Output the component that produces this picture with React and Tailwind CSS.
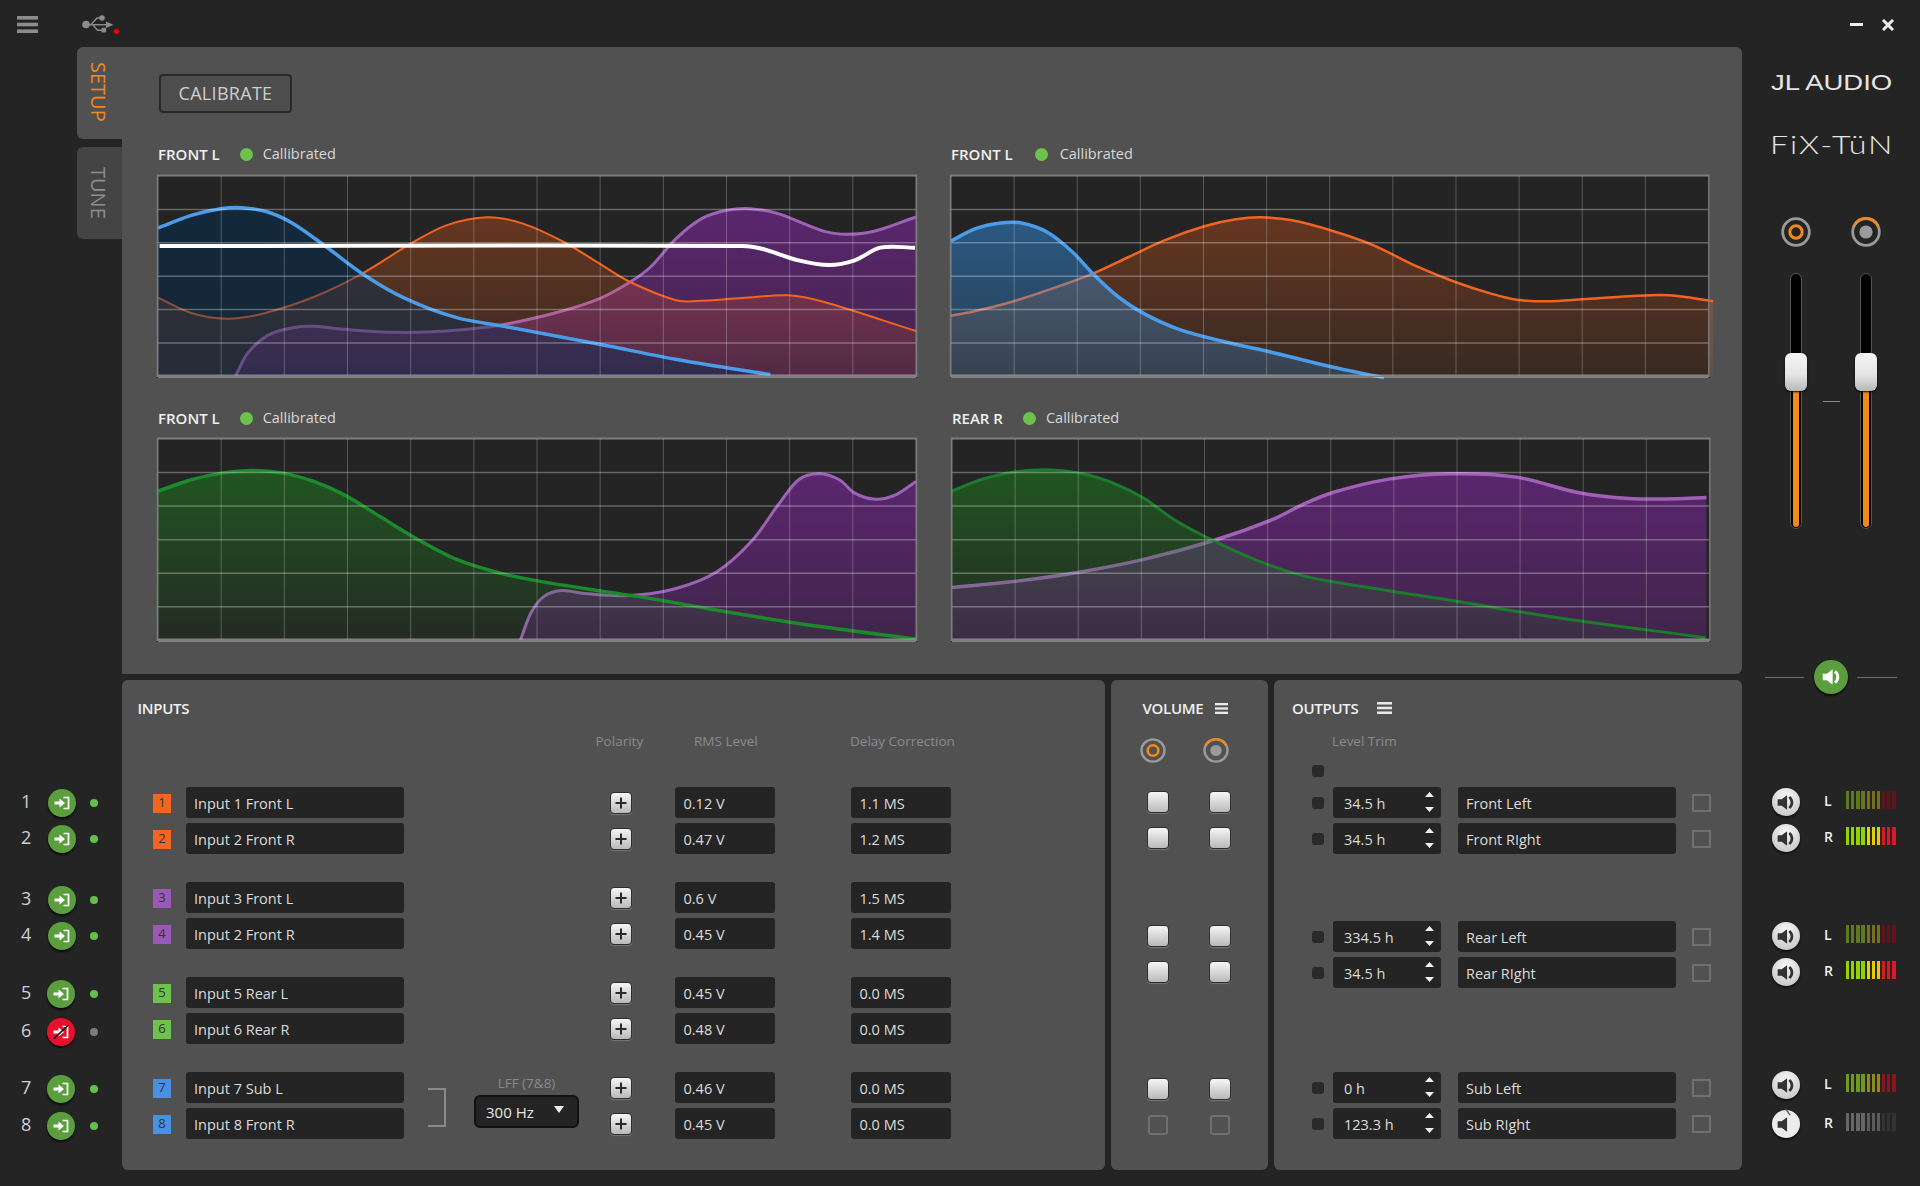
const font = { fontFamily: '"Open Sans", "Noto Sans", sans-serif' };

// curves are sampled in picture space, smoothed by slope so long flat runs don't overshoot
function smooth(pts) {
  const slope = (i) => {
    const a = pts[Math.max(i - 1, 0)];
    const b = pts[Math.min(i + 1, pts.length - 1)];
    return (b[1] - a[1]) / (b[0] - a[0]);
  };
  let d = `M${pts[0][0]} ${pts[0][1]}`;
  for (let i = 0; i < pts.length - 1; i++) {
    const [x1, y1] = pts[i];
    const [x2, y2] = pts[i + 1];
    const h = (x2 - x1) / 3;
    d += ` C${x1 + h} ${y1 + slope(i) * h} ${x2 - h} ${y2 - slope(i + 1) * h} ${x2} ${y2}`;
  }
  return d;
}

const GRADS = {
  purple: ['rgb(142,40,180)', 0.52, 0.26],
  orange: ['rgb(255,98,22)', 0.3, 0.09],
  navy: ['rgb(0,46,90)', 0.45, 0.38],
  blue: ['rgb(50,150,240)', 0.46, 0.22],
  green: ['rgb(30,130,30)', 0.53, 0.07],
};

const charts = [
  {
    id: 'a', label: 'FRONT L', box: [33, 44, 1489, 609], grid: [35, 1520, 47, 648], h: 'h-[203px]',
    series: [
      { fill: 'purple', stroke: '#9c62b4', w: 3, pts: [[187,646],[210,580],[250,525],[300,502],[340,498],[400,507],[500,516],[600,512],[710,493],[820,455],[900,415],[960,365],[1000,320],[1050,235],[1100,175],[1150,150],[1195,145],[1250,160],[1300,190],[1340,213],[1385,222],[1440,212],[1520,170]] },
      { fill: 'orange', stroke: '#f26322', w: 2, pts: [[35,412],[100,458],[170,475],[240,460],[340,410],[435,340],[530,250],[600,195],[680,171],[750,190],[830,245],[900,310],[960,365],[1050,420],[1090,422],[1180,413],[1270,405],[1340,425],[1520,512]] },
      { fill: 'navy', stroke: '#4a9be8', w: 3.5, pts: [[35,203],[100,165],[158,145],[200,142],[250,155],[300,190],[365,260],[435,340],[520,415],[620,472],[710,497],[900,552],[1060,600],[1235,643]] },
      { stroke: '#ffffff', w: 4, pts: [[38,257],[1180,257],[1220,266],[1290,300],[1350,314],[1400,300],[1450,262],[1518,262]] },
    ],
  },
  {
    id: 'b', label: 'FRONT L', box: [20, 44, 1489, 609], grid: [22, 1506, 47, 648], h: 'h-[203px]',
    series: [
      { fill: 'orange', stroke: '#f26322', w: 2.5, pts: [[22,466],[70,452],[140,425],[220,385],[300,340],[370,290],[440,240],[520,197],[580,177],[630,171],[690,180],[770,212],[850,255],[930,315],[1010,365],[1080,400],[1130,418],[1190,423],[1260,417],[1350,408],[1430,405],[1515,423]] },
      { fill: 'blue', stroke: '#4a9be8', w: 3.5, pts: [[22,242],[70,205],[120,188],[160,188],[210,215],[260,275],[300,340],[350,410],[400,460],[470,508],[560,545],[640,572],[760,617],[870,652]] },
    ],
  },
  {
    id: 'c', label: 'FRONT L', box: [33, 115, 1489, 610], grid: [35, 1520, 118, 720], h: 'h-[204px]',
    series: [
      { fill: 'purple', stroke: '#9c62b4', w: 3, pts: [[745,719],[765,640],[790,590],[825,571],[870,580],[960,586],[1050,565],[1130,515],[1200,420],[1250,315],[1290,240],[1330,222],[1370,240],[1400,280],[1440,298],[1480,285],[1520,245]] },
      { fill: 'green', stroke: '#1a8a2a', w: 3.5, pts: [[35,274],[100,240],[160,220],[220,212],[280,220],[340,245],[400,285],[470,350],[540,415],[620,478],[700,517],[770,540],[900,572],[1000,595],[1150,635],[1300,672],[1520,716]] },
    ],
  },
  {
    id: 'd', label: 'REAR R', box: [22, 115, 1489, 610], grid: [24, 1508, 118, 720], h: 'h-[204px]',
    series: [
      { fill: 'purple', stroke: '#a060b8', w: 3.5, pts: [[22,562],[140,545],[270,517],[400,478],[540,420],[650,360],[710,315],[770,278],[880,238],[1000,222],[1130,232],[1250,278],[1350,296],[1440,297],[1502,293]] },
      { fill: 'green', stroke: '#1c7a2c', w: 3, pts: [[24,274],[80,240],[140,218],[210,210],[280,222],[340,250],[400,295],[460,360],[540,425],[620,480],[700,522],[770,545],[1000,600],[1200,650],[1500,712]] },
    ],
  },
];

function Chart({ chart }) {
  const [x0, x1, y0, y1] = chart.grid;
  const bottom = y1;
  return (
    <svg
      className={`block w-[760px] bg-[#242424] overflow-visible ${chart.h}`}
      viewBox={chart.box.join(' ')}
      preserveAspectRatio="none"
    >
      <defs>
        {Object.entries(GRADS).map(([k, [c, top, low]]) => (
          <linearGradient key={k} id={`${chart.id}-${k}`} x1="0" y1="0" x2="0" y2="1">
            <stop offset="0" stopColor={c} stopOpacity={top} />
            <stop offset="1" stopColor={c} stopOpacity={low} />
          </linearGradient>
        ))}
      </defs>
      {chart.series.filter((s) => s.stroke !== '#ffffff').map((s, i) => {
        const line = smooth(s.pts);
        const first = s.pts[0][0];
        const last = s.pts[s.pts.length - 1][0];
        return (
          <g key={i}>
            <path d={`${line} L${last} ${bottom} L${first} ${bottom} Z`} fill={`url(#${chart.id}-${s.fill})`} />
            <path d={line} fill="none" stroke={s.stroke} strokeWidth={s.w} vectorEffect="non-scaling-stroke" />
          </g>
        );
      })}
      {Array.from({ length: 13 }).map((_, i) => {
        const x = x0 + ((x1 - x0) * i) / 12;
        return <line key={i} x1={x} x2={x} y1={y0} y2={y1} stroke="#fff" strokeOpacity="0.24" strokeWidth="1" vectorEffect="non-scaling-stroke" />;
      })}
      {Array.from({ length: 7 }).map((_, i) => {
        const y = y0 + ((y1 - y0) * i) / 6;
        return <line key={i} x1={x0} x2={x1} y1={y} y2={y} stroke="#fff" strokeOpacity={i === 6 ? 0.42 : 0.3} strokeWidth={i === 6 ? 3.5 : 1.5} vectorEffect="non-scaling-stroke" />;
      })}
      <rect x={x0 - 1} y={y0 - 2} width={x1 - x0 + 2} height={y1 - y0 + 2} fill="none" stroke="#7c7c7c" strokeWidth="1.5" vectorEffect="non-scaling-stroke" />
      {chart.series.filter((s) => s.stroke === '#ffffff').map((s, i) => (
        <path key={i} d={smooth(s.pts)} fill="none" stroke={s.stroke} strokeWidth={s.w} vectorEffect="non-scaling-stroke" />
      ))}
    </svg>
  );
}

function ChartLabel({ label, wide }) {
  return (
    <div className={`h-[20px] flex items-center pl-px text-[15px] ${wide ? 'gap-[22px]' : 'gap-[20px]'}`}>
      <span className="font-semibold text-[#f0f0f0]">{label}</span>
      <span className="w-[13px] h-[13px] rounded-full bg-[#6cc24a]" />
      <span className="-ml-[10px] text-[14.5px] text-[#d8d8d8]">Callibrated</span>
    </div>
  );
}

function Burger({ className }) {
  return (
    <svg className={className} viewBox="0 0 21 17" preserveAspectRatio="none" fill="currentColor">
      <rect width="21" height="3.6" />
      <rect y="6.7" width="21" height="3.6" />
      <rect y="13.4" width="21" height="3.6" />
    </svg>
  );
}

function UsbIcon() {
  return (
    <svg className="w-[32px] h-[18px] text-[#8c8c8c]" viewBox="0 0 32 18" fill="currentColor">
      <circle cx="4" cy="9.5" r="3.8" />
      <path d="M6 9h19v1.4H6z" />
      <path d="M24 6.5 L31.5 9.7 L24 13z" />
      <path d="M9 9.4 L15 3 H18" fill="none" stroke="currentColor" strokeWidth="1.4" />
      <circle cx="20" cy="3" r="2.8" />
      <path d="M11 10 L15.5 15.2 H20" fill="none" stroke="currentColor" strokeWidth="1.4" />
      <rect x="19.5" y="12.8" width="4.6" height="4.6" />
    </svg>
  );
}

function InputIcon({ off }) {
  return (
    <svg className="w-[16px] h-[14px] text-white" viewBox="0 0 16 14" fill="currentColor">
      <path d="M0.5 5.5h5V2.6L11 7l-5.5 4.4V8.5h-5z" />
      <path d="M9.5 1.5h5v11h-5" fill="none" stroke="currentColor" strokeWidth="1.7" />
      {off && <line x1="0" y1="14.5" x2="16" y2="-0.5" stroke="#111" strokeWidth="1.6" />}
    </svg>
  );
}

function SpeakerIcon({ className, muted }) {
  return (
    <svg className={`${className} overflow-visible`} viewBox="0 0 20 20" fill="currentColor">
      <path d="M2.5 7h3.8L11.5 3v14l-5.2-4H2.5z" />
      {!muted && <path d="M13.6 4.8c3.4 2.8 3.4 7.6 0 10.4" fill="none" stroke="currentColor" strokeWidth="2.6" />}
      {muted && <line x1="10" y1="-5" x2="14.5" y2="1" stroke="#555" strokeWidth="1.2" />}
    </svg>
  );
}

function Radio({ on, className }) {
  return (
    <svg className={className} viewBox="0 0 30 30" preserveAspectRatio="none" fill="none">
      <circle cx="15" cy="15" r="13.3" stroke="#9a9a9a" strokeWidth="2.8" />
      {on ? (
        <circle cx="15" cy="15" r="6.2" stroke="#f08a1c" strokeWidth="3" />
      ) : (
        <>
          <path d="M3 9 A13.3 13.3 0 0 1 27 9" stroke="#f08a1c" strokeWidth="2.8" />
          <circle cx="15" cy="15" r="6.6" fill="#9a9a9a" />
        </>
      )}
    </svg>
  );
}

const keycap = 'bg-[linear-gradient(#f6f6f6,#b9b9b9)] border border-[#2e2e2e] rounded-[4px] shadow-[0_1px_1px_#777]';

function Field({ className = '', children }) {
  return (
    <div className={`h-[31px] pt-[2px] bg-[#242424] rounded-[3px] flex items-center text-[14.5px] text-[#dcdcdc] ${className}`}>
      {children}
    </div>
  );
}

function Plus() {
  return (
    <div className={`w-[22px] h-[22px] flex items-center justify-center ${keycap}`}>
      <svg className="w-[12px] h-[12px]" viewBox="0 0 12 12" fill="#2a2a2a">
        <path d="M5 0.5h2V5h4.5v2H7v4.5H5V7H0.5V5H5z" />
      </svg>
    </div>
  );
}

const inputGroups = [
  {
    color: 'bg-[#f4651f]',
    rows: [
      { n: 1, name: 'Input 1 Front L', rms: '0.12 V', delay: '1.1 MS' },
      { n: 2, name: 'Input 2 Front R', rms: '0.47 V', delay: '1.2 MS' },
    ],
  },
  {
    color: 'bg-[#9b59b6]',
    rows: [
      { n: 3, name: 'Input 3 Front L', rms: '0.6 V', delay: '1.5 MS' },
      { n: 4, name: 'Input 2 Front R', rms: '0.45 V', delay: '1.4 MS' },
    ],
  },
  {
    color: 'bg-[#6cc24a]',
    rows: [
      { n: 5, name: 'Input 5 Rear L', rms: '0.45 V', delay: '0.0 MS' },
      { n: 6, name: 'Input 6 Rear R', rms: '0.48 V', delay: '0.0 MS' },
    ],
  },
  {
    color: 'bg-[#4a90e2]',
    lff: true,
    rows: [
      { n: 7, name: 'Input 7 Sub L', rms: '0.46 V', delay: '0.0 MS' },
      { n: 8, name: 'Input 8 Front R', rms: '0.45 V', delay: '0.0 MS' },
    ],
  },
];

function InputGroup({ group }) {
  return (
    <div className="flex h-[67px]">
      <div className="flex flex-col gap-[5px]">
        {group.rows.map((r) => (
          <div key={r.n} className="flex items-center">
            <div className={`ml-[31px] mt-px w-[18px] h-[19px] flex items-center justify-center text-[13px] text-[#333] ${group.color}`}>{r.n}</div>
            <Field className="ml-[15px] w-[218px] pl-[8px]">{r.name}</Field>
          </div>
        ))}
      </div>
      <div className="w-[205.5px] flex items-start">
        {group.lff && (
          <>
            <div className="ml-[24px] mt-[16px] w-[18px] h-[39px] border-y-2 border-r-2 border-[#8a8a8a]" />
            <div className="ml-[28px]">
              <div className="h-[23px] flex items-center justify-center text-[13.5px] text-[#8a8a8a]">LFF (7&amp;8)</div>
              <div className="w-[105px] h-[33px] pt-px bg-[#242424] border-2 border-[#111] rounded-[6px] flex items-center pl-[10px] text-[15px] text-[#e6e6e6]">
                300 Hz
                <svg className="ml-[20px] -mt-[5px] w-[10px] h-[7px]" viewBox="0 0 10 7" fill="#f0f0f0">
                  <path d="M0 0h10L5 7z" />
                </svg>
              </div>
            </div>
          </>
        )}
      </div>
      <div className="flex flex-col gap-[5px]">
        {group.rows.map((r) => (
          <div key={r.n} className="flex items-center">
            <Plus />
            <Field className="ml-[43px] w-[100px] pl-[9px]">{r.rms}</Field>
            <Field className="ml-[76px] w-[100px] pl-[9px]">{r.delay}</Field>
          </div>
        ))}
      </div>
    </div>
  );
}

const leftRows = [
  { n: 1, mt: 'mt-[546px]', x: 'ml-[8px]' },
  { n: 2, mt: 'mt-0', x: 'ml-[8px]' },
  { n: 3, mt: 'mt-[25px]', x: 'ml-[8px]' },
  { n: 4, mt: 'mt-0', x: 'ml-[8px]' },
  { n: 5, mt: 'mt-[22px]', x: 'ml-[6.5px]' },
  { n: 6, mt: 'mt-[2px]', x: 'ml-[6.5px]', off: true },
  { n: 7, mt: 'mt-[21px]', x: 'ml-[6.5px]' },
  { n: 8, mt: 'mt-px', x: 'ml-[6.5px]' },
];

function LeftRail() {
  return (
    <div className="w-[122px] shrink-0">
      <div className="pl-[77px]">
        <div className="h-[92px] bg-[#525152] rounded-l-[6px] flex justify-center pt-[15px] pr-[4px]">
          <span className="[writing-mode:vertical-rl] text-[20px] leading-none text-[#f08a1c]">SETUP</span>
        </div>
        <div className="mt-[8px] h-[92px] bg-[#454445] rounded-l-[6px] flex justify-center pt-[20px] pr-[4px]">
          <span className="[writing-mode:vertical-rl] text-[20px] leading-none text-[#8e8e8e]">TUNE</span>
        </div>
      </div>
      {leftRows.map((r) => (
        <div key={r.n} className={`h-[36px] flex items-center ${r.mt}`}>
          <span className="w-[40px] pl-[21px] -mt-[3px] text-[18px] text-[#d0d0d0]">{r.n}</span>
          <div className={`${r.x} w-[28px] h-[28px] rounded-full flex items-center justify-center shadow-[0_2px_2px_#0a0a0a] ${r.off ? 'bg-[#e8112d]' : 'bg-[#5a9e3e]'}`}>
            <InputIcon off={r.off} />
          </div>
          <span className={`ml-auto mr-[24px] w-[8px] h-[8px] rounded-full ${r.off ? 'bg-[#7a7a7a]' : 'bg-[#63c04a]'}`} />
        </div>
      ))}
    </div>
  );
}

function VolCheck({ disabled }) {
  return disabled ? (
    <div className="w-[20px] h-[20px] mx-px mt-px border-2 border-[#6f6f6f] rounded-[3px]" />
  ) : (
    <div className={`w-[22px] h-[22px] ${keycap}`} />
  );
}

const volGroups = [
  { mt: 'mt-[20px]', rows: [[false, false], [false, false]] },
  { mt: 'mt-[76px]', rows: [[false, false], [false, false]] },
  { mt: 'mt-[95px]', rows: [[false, false], [true, true]] },
];

const outputGroups = [
  { mt: 'mt-[4px]', rows: [['34.5 h', 'Front Left'], ['34.5 h', 'Front RIght']] },
  { mt: 'mt-[67px]', rows: [['334.5 h', 'Rear Left'], ['34.5 h', 'Rear RIght']] },
  { mt: 'mt-[84px]', rows: [['0 h', 'Sub Left'], ['123.3 h', 'Sub RIght']] },
];

function SpinArrows() {
  return (
    <svg className="w-[9px] h-[21px] ml-auto mr-[7px] -mt-[2px]" viewBox="0 0 9 21" fill="#efefef">
      <path d="M4.5 0L9 5H0z" />
      <path d="M0 15h9l-4.5 5z" />
    </svg>
  );
}

function Panels() {
  return (
    <div className="mt-[6px] h-[490px] flex gap-[6px]">
      <div className="w-[983px] bg-[#525152] rounded-[6px]">
        <div className="mt-[6px] h-[44px] pl-[15.5px] flex items-center text-[15px] font-semibold tracking-[-0.3px] text-[#f0f0f0]">INPUTS</div>
        <div className="h-[22px] flex items-center pl-[473.5px] text-[13.5px] text-[#8a8a8a]">
          <span className="w-[98.5px]">Polarity</span>
          <span className="w-[156px]">RMS Level</span>
          <span>Delay Correction</span>
        </div>
        <div className="mt-[35px] flex flex-col gap-[28px]">
          {inputGroups.map((g) => <InputGroup key={g.rows[0].n} group={g} />)}
        </div>
      </div>

      <div className="w-[157px] bg-[#525152] rounded-[6px]">
        <div className="mt-[6px] h-[44px] pl-[31.5px] flex items-center gap-[12px] text-[15px] font-semibold tracking-[-0.3px] text-[#f0f0f0]">
          VOLUME
          <Burger className="w-[13px] h-[11px] text-[#e8e8e8]" />
        </div>
        <div className="h-[41px] pl-[28.5px] flex items-center gap-[37px]">
          <Radio on className="w-[26px] h-[25px]" />
          <Radio className="w-[26px] h-[25px]" />
        </div>
        {volGroups.map((g, i) => (
          <div key={i} className={`${g.mt} flex flex-col gap-[14px] pl-[35.5px]`}>
            {g.rows.map((r, j) => (
              <div key={j} className="flex gap-[40.5px]">
                <VolCheck disabled={r[0]} />
                <VolCheck disabled={r[1]} />
              </div>
            ))}
          </div>
        ))}
      </div>

      <div className="w-[468px] bg-[#525152] rounded-[6px]">
        <div className="mt-[6px] h-[44px] pl-[18px] flex items-center gap-[19px] text-[15px] font-semibold tracking-[-0.3px] text-[#f0f0f0]">
          OUTPUTS
          <Burger className="w-[15px] h-[12px] text-[#e8e8e8]" />
        </div>
        <div className="h-[22px] flex items-center pl-[58px] text-[13.5px] text-[#8a8a8a]">Level Trim</div>
        <div className="mt-[7px] h-[24px] flex items-center pl-[37.5px]">
          <span className="w-[12px] h-[12px] rounded-[3px] bg-[#2a2a2a]" />
        </div>
        {outputGroups.map((g, i) => (
          <div key={i} className={`${g.mt} flex flex-col gap-[5px]`}>
            {g.rows.map((r) => (
              <div key={r[1]} className="flex items-center pl-[37.5px]">
                <span className="w-[12px] h-[12px] rounded-[3px] bg-[#2a2a2a]" />
                <Field className="ml-[9.5px] w-[108px] pl-[11px]">
                  {r[0]}
                  <SpinArrows />
                </Field>
                <Field className="ml-[17px] w-[218px] pl-[8px]">{r[1]}</Field>
                <div className="ml-[16px] w-[19px] h-[18px] border-2 border-[#707070]" />
              </div>
            ))}
          </div>
        ))}
      </div>
    </div>
  );
}

function Slider() {
  return (
    <div className="relative w-[12px] h-[256px] rounded-full bg-black border border-[#555]">
      <div className="absolute left-[2px] bottom-[1px] w-[6px] h-[138px] rounded-b-full bg-[#f08a1c]" />
      <div className="absolute -left-[6px] top-[79px] w-[22px] h-[38px] rounded-[6px] bg-[linear-gradient(#f4f4f4,#e6e6e6_55%,#b8b8b8)] shadow-[0_1px_2px_#000]" />
    </div>
  );
}

const meterRows = [
  { mt: 'mt-[94px]', ch: 'L', level: 'dim' },
  { mt: 'mt-[8px]', ch: 'R', level: 'hot' },
  { mt: 'mt-[70px]', ch: 'L', level: 'dim' },
  { mt: 'mt-[8px]', ch: 'R', level: 'hot' },
  { mt: 'mt-[85px]', ch: 'L', level: 'mid' },
  { mt: 'mt-[11px]', ch: 'R', level: 'off', muted: true },
];

const meterColors = {
  hot: ['#8fd400', '#8fd400', '#8fd400', '#8fd400', '#e6cf00', '#e6cf00', '#e6cf00', '#e01525', '#e01525', '#e01525'],
  dim: ['#5f7a1c', '#5f7a1c', '#5f7a1c', '#5f7a1c', '#77701f', '#77701f', '#77701f', '#661019', '#661019', '#661019'],
  mid: ['#6d9a1c', '#6d9a1c', '#6d9a1c', '#6d9a1c', '#8f8a1a', '#8f8a1a', '#8f8a1a', '#8c1420', '#8c1420', '#8c1420'],
  off: ['#666', '#666', '#666', '#666', '#5c5c5c', '#5c5c5c', '#5c5c5c', '#333', '#333', '#333'],
};

function RightRail() {
  return (
    <div className="flex-1">
      <div className="mt-[26px] h-[20px] pl-[29px] flex items-center">
        <span className="origin-left scale-x-[1.25] text-[22px] leading-none text-[#e4e4e4] whitespace-nowrap" style={{ fontFamily: '"Liberation Sans", sans-serif' }}>JL AUDIO</span>
      </div>
      <div className="mt-[40px] h-[22px] pl-[28px] flex items-center">
        <span className="origin-left scale-x-[1.24] text-[26px] leading-none font-light tracking-[1.5px] text-[#e4e4e4] whitespace-nowrap" style={{ fontFamily: '"Lato", sans-serif' }}>FiX-TüN</span>
      </div>
      <div className="mt-[62px] pl-[39px] flex items-center">
        <div className="w-[30px] flex flex-col items-center">
          <Radio on className="w-[30px] h-[30px]" />
          <div className="mt-[26px]"><Slider /></div>
        </div>
        <div className="w-[40px] mt-[56px] flex justify-center">
          <span className="w-[17px] h-px bg-[#8a8a8a]" />
        </div>
        <div className="w-[30px] flex flex-col items-center">
          <Radio className="w-[30px] h-[30px]" />
          <div className="mt-[26px]"><Slider /></div>
        </div>
      </div>
      <div className="mt-[131px] pl-[23px] flex items-center">
        <span className="w-[39px] h-px bg-[#6e6e6e]" />
        <div className="ml-[10px] w-[34px] h-[34px] rounded-full bg-[#5a9e3e] flex items-center justify-center shadow-[0_2px_2px_#0a0a0a]">
          <SpeakerIcon className="w-[22px] h-[22px] text-white" />
        </div>
        <span className="ml-[9px] w-[40px] h-px bg-[#6e6e6e]" />
      </div>
      {meterRows.map((r, i) => (
        <div key={i} className={`${r.mt} h-[28px] flex items-center pl-[29.5px]`}>
          <div className={`w-[28px] h-[28px] rounded-full flex items-center justify-center shadow-[0_2px_2px_#111] ${r.muted ? 'bg-[#ececec]' : 'bg-[radial-gradient(circle_at_50%_30%,#f8f8f8,#bdbdbd)]'}`}>
            <SpeakerIcon className="w-[21px] h-[21px] text-[#333]" muted={r.muted} />
          </div>
          <span className="ml-[24.5px] w-[22px] -mt-[4px] text-[14px] font-semibold text-[#f0f0f0]">{r.ch}</span>
          <div className="flex gap-[1.85px] -mt-[4px] h-[18.5px]">
            {meterColors[r.level].map((c, j) => (
              <span key={j} className="w-[3.3px] h-full" style={{ backgroundColor: c }} />
            ))}
          </div>
        </div>
      ))}
    </div>
  );
}

export default function App() {
  return (
    <div className="w-[1920px] h-[1186px] bg-[#242424] overflow-hidden" style={font}>
      <div className="h-[47px] flex items-center pl-[17px]">
        <Burger className="mt-[2px] w-[21px] h-[17px] text-[#8c8c8c]" />
        <div className="ml-[44px] mt-px relative">
          <UsbIcon />
          <span className="absolute -right-[5px] -bottom-px w-[5px] h-[5px] rounded-full bg-[#ff0000]" />
        </div>
        <svg className="ml-auto w-[13px] h-[3px] mt-[2px]" viewBox="0 0 13 3" fill="#efefef"><rect width="13" height="3" /></svg>
        <svg className="ml-[19px] mr-[26px] w-[12px] h-[12px] mt-[3px]" viewBox="0 0 12 12" stroke="#efefef" strokeWidth="3"><path d="M1 1l10 10M11 1L1 11" /></svg>
      </div>
      <div className="flex">
        <LeftRail />
        <div className="w-[1620px] shrink-0">
          <div className="h-[627px] bg-[#525152] rounded-r-[6px] pl-[35px]">
            <div className="pt-[27px] pl-[2px]">
              <button className="w-[133px] h-[39px] border-2 border-[#2a2a2a] rounded-[4px] text-[18px] tracking-[0.3px] text-[#cfcfcf] bg-[#4e4d4e]">CALIBRATE</button>
            </div>
            <div className="mt-[31px] flex">
              <div className="w-[793px]">
                <ChartLabel label={charts[0].label} />
                <div className="mt-[11px]"><Chart chart={charts[0]} /></div>
              </div>
              <div>
                <ChartLabel label={charts[1].label} wide />
                <div className="mt-[11px]"><Chart chart={charts[1]} /></div>
              </div>
            </div>
            <div className="mt-[30px] flex">
              <div className="w-[794px]">
                <ChartLabel label={charts[2].label} />
                <div className="mt-[10px]"><Chart chart={charts[2]} /></div>
              </div>
              <div>
                <ChartLabel label={charts[3].label} />
                <div className="mt-[10px]"><Chart chart={charts[3]} /></div>
              </div>
            </div>
          </div>
          <Panels />
        </div>
        <RightRail />
      </div>
    </div>
  );
}
